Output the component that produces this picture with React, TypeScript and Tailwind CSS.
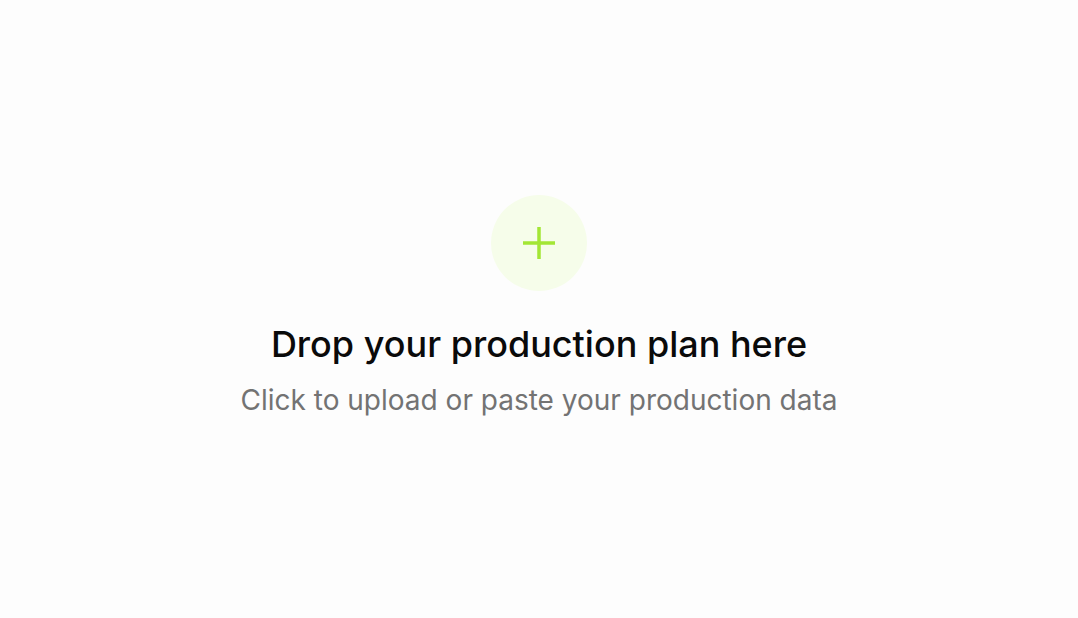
import React from "react";

export default function App() {
  return (
    <div
      className="w-full h-[618px] bg-[#fdfdfd] flex flex-col items-center pt-[195px]"
      style={{ fontFamily: "Inter, 'Noto Sans', sans-serif" }}
    >
      <div className="w-24 h-24 rounded-full bg-[#f6fdea] flex items-center justify-center">
        <svg width="34" height="34" viewBox="0 0 34 34" fill="none">
          <path d="M17 1v32M1 17h32" stroke="#a3e635" strokeWidth="3.5" />
        </svg>
      </div>
      <h1 className="mt-[31px] text-[36px] leading-[44px] font-medium text-[#0a0a0a]">
        Drop your production plan here
      </h1>
      <p className="mt-[16px] text-[28px] leading-[36px] text-[#737373]">
        Click to upload or paste your production data
      </p>
    </div>
  );
}
